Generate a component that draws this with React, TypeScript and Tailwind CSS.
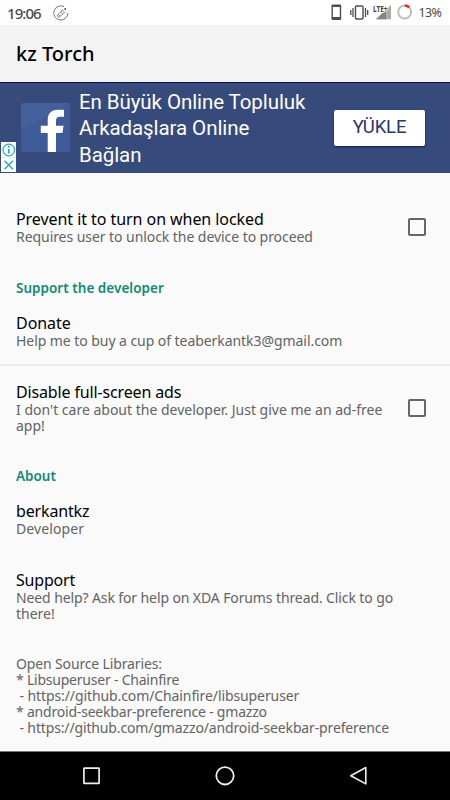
import React from "react";

const TITLE = "block h-5 whitespace-pre text-[16px] leading-5 text-black";
const BODY = "block h-4 whitespace-pre text-[14px] leading-4 text-[#636363]";
const HEAD = "block h-4 whitespace-pre text-[13.5px] font-semibold leading-4 text-[#0f8b78]";

function Checkbox() {
  return <span className="mr-6 size-[18px] shrink-0 rounded-[2px] border-2 border-[#666]" />;
}

function StatusBar() {
  return (
    <div className="flex h-[25px] items-center bg-white text-[#4a4a4a]">
      <span className="ml-[7px] w-[46px] whitespace-pre text-[15px] font-medium leading-5 tracking-[-0.95px]">19:06</span>
      <svg width="16" height="16" viewBox="0 0 16 16" fill="none" stroke="#666">
        <path d="M14.9 8.2A7.1 7.1 0 1 1 11.2 1.7" strokeWidth="0.9" />
        <path d="M4 10.7 7.9 6.7 10 8.8 6 12.4ZM8 6.6 9.2 4.8 11.6 7.2 10 8.8M5.3 9.3 7 11" strokeWidth="0.8" />
        <circle cx="12.2" cy="4" r=".9" fill="#444" stroke="none" />
      </svg>
      <span className="grow" />
      <svg width="93" height="25" viewBox="0 0 93 25" fill="none">
        <rect x="11.5" y="4.5" width="9.7" height="15.5" rx="1.2" fill="#4d4d4d" />
        <rect x="12.9" y="7" width="6.9" height="10" fill="#fff" />
        <rect x="35.5" y="6" width="7.5" height="13" rx="1" stroke="#4d4d4d" strokeWidth="1.4" />
        <path d="M33 8v9M45.5 8v9M30.8 10v5M47.7 10v5" stroke="#4d4d4d" strokeWidth="1.3" />
        <path d="M71 5V19.3H56Z" fill="#c6c6c6" />
        <path d="M66 9.8V19.3H56Z" fill="#8a8a8a" />
        <path d="M71 5V19.3H56Z" fill="#777" opacity=".35" />
        <text x="53" y="11.5" fontSize="8.5" fontWeight="700" fill="#444" stroke="#fff" strokeWidth="1.4" paintOrder="stroke" textLength="14.5" lengthAdjust="spacingAndGlyphs">LTE+</text>
        <circle cx="84.7" cy="12" r="6.5" stroke="#bdbdbd" strokeWidth="2" />
        <path d="M84.9 5.5A6.5 6.5 0 0 1 89.2 7.3" stroke="#f22b13" strokeWidth="2.4" />
      </svg>
      <span className="ml-[5.5px] w-[31.5px] whitespace-pre text-[12.5px] leading-5 tracking-[-0.6px]">13%</span>
    </div>
  );
}

function AdBanner() {
  return (
    <div className="relative flex h-[91px] items-start border-t border-[#0c0d5c] bg-[#364b7b]">
      <svg width="49" height="49" viewBox="0 0 49 49" className="ml-[21px] mt-[20px] shrink-0">
        <rect width="49" height="49" rx="2.5" fill="#3e5a98" />
        <path d="M0 3Q0 0 3 0H49L0 27Z" fill="#4b659f" opacity=".6" />
        <path d="M26.7 49V30H19.8V22.7H26.7V17C26.7 10.4 30.5 6.8 37 6.8H43V13.8H39C36 13.8 35 15.3 35 18V22.7H42.5L41.5 30H35V49Z" fill="#fff" />
      </svg>
      <div className="ml-[9px] mt-[6px] w-[255px] whitespace-pre font-[Roboto,sans-serif] text-[20.5px] leading-[26.3px] tracking-[-0.08px] text-white">
        <span className="block">En Büyük Online Topluluk</span>
        <span className="block">Arkadaşlara Online</span>
        <span className="block">Bağlan</span>
      </div>
      <span className="mt-[27px] flex h-[36px] w-[91px] items-center justify-center rounded-[2px] bg-white font-[Roboto,sans-serif] text-[18.5px] tracking-[-0.15px] text-[#263867] shadow-[0_1px_2px_#111a55]">YÜKLE</span>
      <svg width="17" height="31" viewBox="0 0 17 31" className="absolute bottom-0 left-0" fill="none" stroke="#24a7ce">
        <path d="M1 0H16V30H1Z" fill="#fff" stroke="none" />
        <path d="M1 15.5H16" stroke="#dbe5ec" strokeWidth=".7" />
        <circle cx="8.8" cy="8" r="5.8" strokeWidth="1.2" />
        <path d="M8.8 7v4.5M8.8 4v1.7" strokeWidth="1.7" />
        <path d="m4.5 18.7 8.5 8.5M13 18.7l-8.5 8.5" strokeWidth="1.5" />
      </svg>
    </div>
  );
}

function NavBar() {
  return (
    <div className="flex h-[49px] items-center justify-between border-t border-[#777] bg-black px-[81px]">
      <svg width="20" height="20" fill="none" stroke="#eee" strokeWidth="1.7"><rect x="2.9" y="2.2" width="15.2" height="15.2" rx=".5" /></svg>
      <svg width="20" height="20" fill="none" stroke="#eee" strokeWidth="1.8"><circle cx="10" cy="9.8" r="8.7" /></svg>
      <svg width="20" height="20" fill="none" stroke="#eee" strokeWidth="1.6" strokeLinejoin="round"><path d="M16.8 1.5V17.9L1.8 9.8Z" /></svg>
    </div>
  );
}

export default function App() {
  return (
    <div className="flex h-[800px] w-[450px] flex-col overflow-hidden bg-[#fafafa] font-['Noto_Sans',sans-serif]">
      <StatusBar />
      <header className="flex h-[57px] items-center bg-[#f3f3f3] pl-4">
        <h1 className="whitespace-pre text-[20px] font-medium leading-7 tracking-[0.02px] text-black">kz Torch</h1>
      </header>
      <AdBanner />
      <main className="flex grow flex-col pl-4">
        <div className="mt-[36px] flex items-center justify-between">
          <div>
            <span className={TITLE + " tracking-[-0.06px]"}>Prevent it to turn on when locked</span>
            <span className={BODY + " tracking-[-0.06px]"}>Requires user to unlock the device to proceed</span>
          </div>
          <Checkbox />
        </div>
        <h2 className={HEAD + " mt-[35px] tracking-[0.02px]"}>Support the developer</h2>
        <div className="mt-[17px]">
          <span className={TITLE + " tracking-[-0.05px]"}>Donate</span>
          <span className={BODY + " tracking-[-0.06px]"}>Help me to buy a cup of teaberkantk3@gmail.com</span>
        </div>
        <div className="-ml-4 mt-[15px] h-[2px] bg-[#ececec]" />
        <div className="mt-4 flex items-center justify-between">
          <div>
            <span className={TITLE + " tracking-[-0.15px]"}>Disable full-screen ads</span>
            <span className={BODY}>I don't care about the developer. Just give me an ad-free</span>
            <span className={BODY}>app!</span>
          </div>
          <Checkbox />
        </div>
        <h2 className={HEAD + " mt-[34px]"}>About</h2>
        <div className="mt-[17px]">
          <span className={TITLE + " tracking-[-0.15px]"}>berkantkz</span>
          <span className={BODY + " tracking-[0.1px]"}>Developer</span>
        </div>
        <div className="mt-[33px]">
          <span className={TITLE + " tracking-[-0.2px]"}>Support</span>
          <span className={BODY + " tracking-[-0.11px]"}>Need help? Ask for help on XDA Forums thread. Click to go</span>
          <span className={BODY}>there!</span>
        </div>
        <div className="mt-[34px]">
          <span className={BODY + " tracking-[-0.14px]"}>Open Source Libraries:</span>
          <span className={BODY + " tracking-[-0.22px]"}>* Libsuperuser - Chainfire</span>
          <span className={BODY + " tracking-[-0.1px]"}> - https://github.com/Chainfire/libsuperuser</span>
          <span className={BODY + " tracking-[-0.2px]"}>* android-seekbar-preference - gmazzo</span>
          <span className={BODY + " tracking-[-0.14px]"}> - https://github.com/gmazzo/android-seekbar-preference</span>
        </div>
      </main>
      <NavBar />
    </div>
  );
}
